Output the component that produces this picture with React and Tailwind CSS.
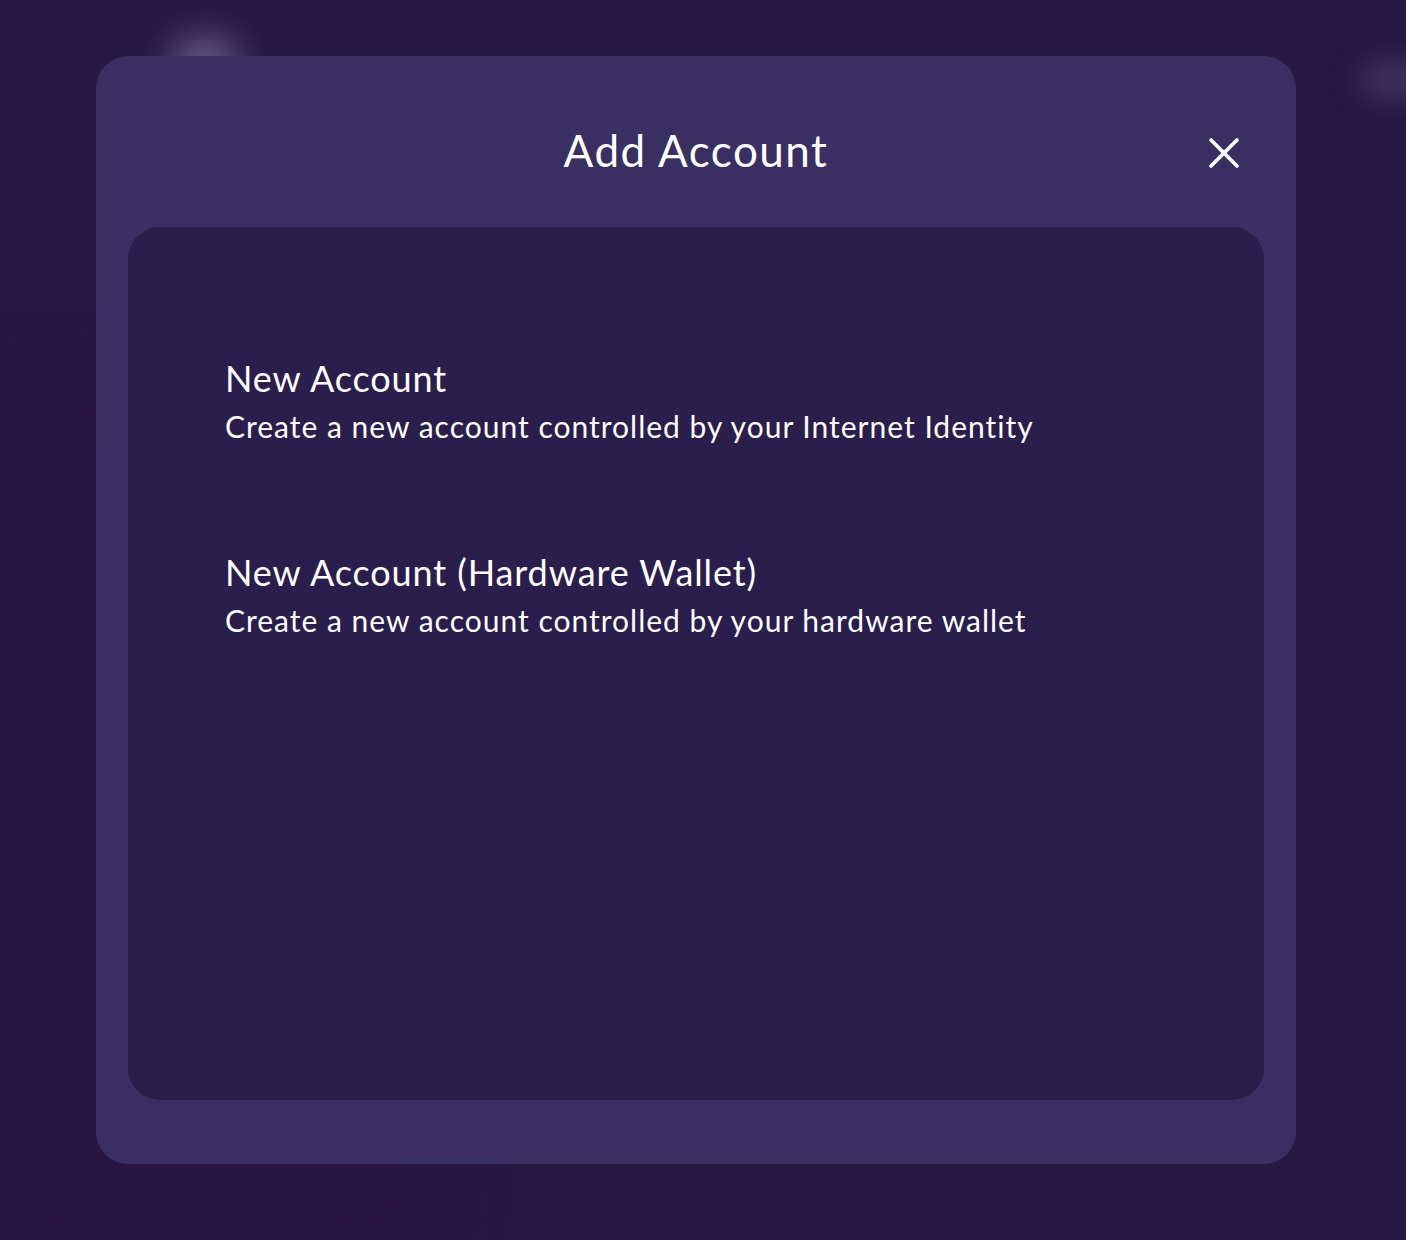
import { X } from "lucide-react";

const options = [
  {
    title: "New Account",
    description: "Create a new account controlled by your Internet Identity",
  },
  {
    title: "New Account (Hardware Wallet)",
    description: "Create a new account controlled by your hardware wallet",
  },
];

export default function App() {
  return (
    <div
      className="relative w-[1406px] h-[1240px] overflow-hidden bg-[#251843] text-white"
      style={{ fontFamily: "Lato, 'Noto Sans', sans-serif" }}
    >
      {/* blurred page behind the modal */}
      <div className="absolute left-[170px] top-[38px] w-[70px] h-[50px] rounded-full bg-[#8a7aa6] blur-[18px] opacity-70"></div>
      <div className="absolute left-[1360px] top-[60px] w-[80px] h-[40px] rounded-full bg-[#4a3b63] blur-[14px] opacity-70"></div>
      <div className="absolute left-0 top-[400px] w-[420px] h-[840px] bg-[#2a1242] blur-[40px] opacity-60"></div>

      <div className="relative pt-[56px] pl-[96px]">
        <div className="w-[1200px] h-[1108px] rounded-[32px] bg-[#3a2f63] px-[32px] pb-[64px] flex flex-col">
          <div className="h-[171px] grid grid-cols-[1fr_auto_1fr] items-center pt-[16px]">
            <div></div>
            <h1 className="text-[44px] leading-none tracking-[1.5px]">Add Account</h1>
            <div className="flex justify-end pr-[14px] pt-[6px]">
              <button className="text-white">
                <X size={52} strokeWidth={1.7} />
              </button>
            </div>
          </div>
          <div className="flex-1 rounded-[32px] bg-[#2a1e4c] pt-[128px] px-[97px] flex flex-col gap-[98px]">
            {options.map((o) => (
              <button key={o.title} className="text-left">
                <p className="text-[36px] leading-[46px] tracking-[0.9px]">{o.title}</p>
                <p className="text-[30px] leading-[50px] tracking-[1px]">{o.description}</p>
              </button>
            ))}
          </div>
        </div>
      </div>
    </div>
  );
}
